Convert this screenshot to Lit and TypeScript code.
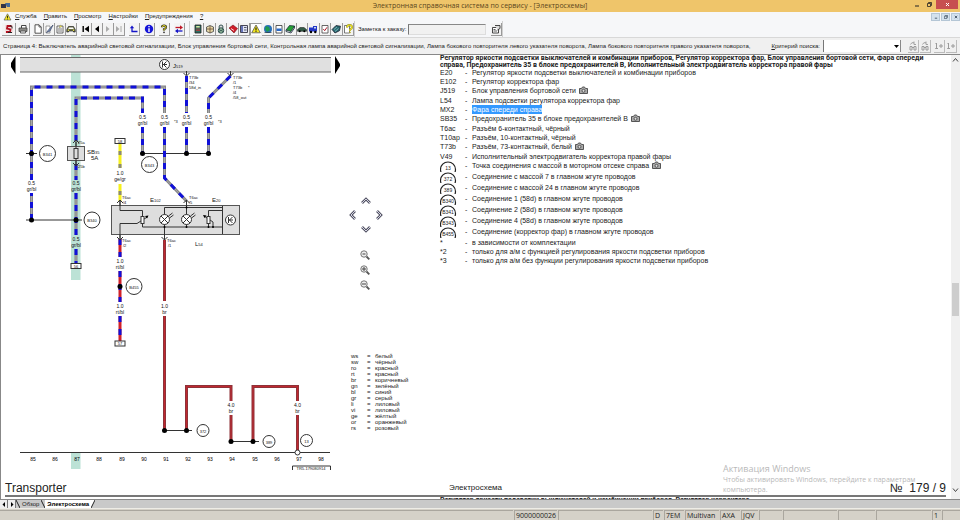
import { LitElement, html, svg, css, nothing } from "lit";
import { customElement } from "lit/decorators.js";
import { classMap } from "lit/directives/class-map.js";

/* ---------- toolbar icons, drawn on a 10 x 10 grid ---------- */
const ICONS: Record<string, unknown> = {
  elsa: svg`<rect x="1" y="1" width="8" height="8" fill="#f3dede"/><path d="M7.500 2H3.500L3 4.500 6.500 5.500 6 8H2" fill="none" stroke="#b01020" stroke-width="1.800"/><path d="M6 1.500l2 1v2M4 8.500h4" stroke="#222" fill="none"/>`,
  print: svg`<path d="M3.500 4V1.500H8V4" fill="#fff" stroke="#444"/><path d="M1 4h8v3.500H1z" fill="#8a8a86" stroke="#444" stroke-width=".8"/><path d="M2.500 7h5v2h-5z" fill="#eee" stroke="#444" stroke-width=".8"/>`,
  page: svg`<path d="M2 .8h4l2.200 2.200v6.200H2z" fill="#fff" stroke="#444" stroke-width=".9"/><path d="M6 .8V3h2.200" fill="none" stroke="#444" stroke-width=".8"/>`,
  brush: svg`<path d="M2 2h4v7H2z" fill="#fff" stroke="#777" stroke-width=".7"/><path d="M9 1L4 6.500 2.500 8.500 6 7z" fill="#7d90b8" stroke="#3a4768" stroke-width=".7"/>`,
  edit: svg`<path d="M2 2h6v7H2z" fill="#fff" stroke="#444" stroke-width=".8"/><path d="M3 5h4M3 7h4" stroke="#555" stroke-width=".8"/><path d="M5 1l2.500 1.500L4 4z" fill="#e8dd50" stroke="#777" stroke-width=".4"/>`,
  car: svg`<path d="M.8 5.500L2.500 2.500h5l1.700 3v2.500H7.500V7h-5v1H.8z" fill="#6b7048" stroke="#222" stroke-width=".7"/><path d="M3 3.500h4l.7 1.500H2.300z" fill="#fff"/><circle cx="2.500" cy="6.200" r=".7" fill="#f5e94a"/><circle cx="7.500" cy="6.200" r=".7" fill="#f5e94a"/>`,
  first: svg`<path d="M2.200 2v6" stroke="#000" stroke-width="1.400"/><path d="M8 1.800v6.400L3.500 5z"/>`,
  prev: svg`<path d="M7 1.800v6.400L3 5z"/>`,
  next: svg`<path d="M3 2v6L6.500 5z" fill="#aaa"/>`,
  last: svg`<path d="M2 2v6L5.500 5z" fill="#aaa"/><path d="M7 2v6" stroke="#aaa"/>`,
  back: svg`<path d="M3 3.500V7.500h5.500" fill="none" stroke="#1414c8" stroke-width="1.300"/><path d="M.8 4.300L3 1.500l2.200 2.800z" fill="#1414c8"/>`,
  info: svg`<circle cx="5" cy="5" r="4.200" fill="#1414d8"/><path d="M5 4.300V8M5 2v1.300" stroke="#fff" stroke-width="1.400"/>`,
  help: svg`<path d="M3 3.200Q3 1.500 5 1.500t2 1.700Q7 4.500 5 5.200V6.500" fill="none" stroke="#222" stroke-width="2.200"/><path d="M3 3.200Q3 1.500 5 1.500t2 1.700Q7 4.500 5 5.200V6.500" fill="none" stroke="#e6dc20" stroke-width="1"/><circle cx="5" cy="8.300" r=".9" fill="#333"/>`,
  swap: svg`<path d="M1.500 3.500H6" stroke="#c01828" stroke-width="1.300"/><path d="M6 1.300v4.400L9 3.500z" fill="#c01828"/><path d="M4 7h4.500" stroke="#1414c8" stroke-width="1.300"/><path d="M4 4.800v4.400L1 7z" fill="#1414c8"/>`,
  book: svg`<path d="M2 1h6v8H2z" fill="#2c6e62" stroke="#222" stroke-width=".8"/><path d="M3.200 2h3.500v1.500H3.200z" fill="#d8e8a0"/><path d="M3 5h4M3 6.500h4" stroke="#b33" stroke-width=".8"/>`,
  box: svg`<path d="M1.500 3L5 1.500 8.500 3v4.500L5 9 1.500 7.500z" fill="#e6d9a8" stroke="#444" stroke-width=".8"/><path d="M5 2v7M2 5h6" stroke="#6b4a30" stroke-width=".8"/>`,
  gauge: svg`<circle cx="5" cy="3" r="2" fill="#ddd" stroke="#244" stroke-width=".9"/><circle cx="5" cy="6.500" r="2.700" fill="#9fc7a4" stroke="#244" stroke-width=".9"/><path d="M2 5l6 3M8 5L2 8" stroke="#244" stroke-width=".7"/>`,
  red: svg`<path d="M1 4l4-3 4.500 3.500L6 9z" fill="#d01c28" stroke="#701018" stroke-width=".6"/><path d="M3 4.500l3 2" stroke="#fff" stroke-width=".8"/>`,
  panel: svg`<path d="M1.500 1.500h7v7h-7z" fill="#dfe4f4" stroke="#334" stroke-width=".9"/><path d="M2 2h2v6H2z" fill="#6674b8"/><path d="M5 3.500h2.500M5 6h2.500" stroke="#334" stroke-width=".8"/>`,
  warn: svg`<path d="M5 1L9.300 8.800H.7z" fill="#f4e820" stroke="#555" stroke-width=".8"/><path d="M5 3.500v3M5 7.200v.8" stroke="#000" stroke-width="1"/>`,
  globe: svg`<circle cx="5" cy="5" r="4" fill="#2a6fb8"/><path d="M3 2l3 1 1 3-3 2-2-3z" fill="#1e9a50"/><path d="M1.500 8.500h7" stroke="#234" stroke-width=".7"/>`,
  tank: svg`<path d="M2 1.500h6v7.500H2z" fill="#fff" stroke="#333" stroke-width=".8"/><path d="M2.500 4.500h5V7h-5z" fill="#2868c8"/>`,
  green: svg`<path d="M1 6l3.500-4.500 5 .5L6 7.500z" fill="#25a035" stroke="#123" stroke-width=".7"/><path d="M1 6v1.500L6 9l3.500-5V2" fill="none" stroke="#123" stroke-width=".8"/>`,
  sedan: svg`<path d="M.5 5.500L3 3.500h4l2.500 2v1.800H.5z" fill="#335c48" stroke="#111" stroke-width=".5"/><circle cx="2.700" cy="7.300" r="1" /><circle cx="7.300" cy="7.300" r="1"/>`,
  truck: svg`<path d="M1 3.500h4v4H1zM5 2h4v5.500H5z" fill="#2336c8"/><path d="M6 3h2v1.500H6z" fill="#cde"/><circle cx="3" cy="8" r="1.200"/><circle cx="7.300" cy="8" r="1.200"/>`,
  check: svg`<path d="M2 1.500h6V9H2z" fill="#fff" stroke="#444" stroke-width=".8"/><path d="M3.300 5l1.400 1.700L7 3.300" fill="none" stroke="#b02030" stroke-width="1"/>`,
  teal: svg`<path d="M1 5.500L5 1.500l4.500.7-1 4.500L4 9z" fill="#2a6a72" stroke="#112" stroke-width=".7"/><path d="M3 5.500l3-2.500M4 7.500l3.500-3" stroke="#9ad0d0" stroke-width=".7"/>`,
  hint: svg`<path d="M1.500 1.500h5V9h-5z" fill="#fff" stroke="#444" stroke-width=".7"/><path d="M4 3.500Q4.200 1 6.500 1T9 3.300Q9 5 7 5.500V7" fill="none" stroke="#888420" stroke-width="2"/><path d="M4 3.500Q4.200 1 6.500 1T9 3.300Q9 5 7 5.500V7" fill="none" stroke="#f0e628" stroke-width="1.200"/><circle cx="7" cy="8.500" r=".8" fill="#b5aa18"/>`,
  note: svg`<path d="M1.500 3.500h6V9h-6z" fill="#fff" stroke="#333" stroke-width=".9"/><path d="M4 1.500h5v3L6.500 6" fill="#ddd" stroke="#333" stroke-width=".9"/><path d="M2.500 5.500h2M2.500 7h3.500" stroke="#333" stroke-width=".8"/>`,
  find: svg`<path d="M2 9V5.500h2V9zM6 9V5.500h2V9zM4 6.500h2" fill="none" stroke="#9a9a9a"/><path d="M2.500 3.500Q3.500.8 6 1.800M6 .5v3h2" fill="none" stroke="#9a9a9a" stroke-width=".9"/>`,
  step: svg`<path d="M1.500 3l1-1v5.500M1.200 7.500H4M5 5h4M7 3v4" fill="none" stroke="#9a9a9a"/>`,
};
const icon = (n: string) => html`<svg class="ico" viewBox="0 0 10 10" aria-hidden="true">${ICONS[n]}</svg>`;

const TOOLS: [string, string][][] = [
  [["elsa", "Служба"], ["print", "Печать"]],
  [["page", "Новый"], ["brush", "Правка"], ["edit", "Изменить"], ["car", "Автомобиль"]],
  [["first", "В начало"], ["prev", "Назад"], ["next", "Вперёд"], ["last", "В конец"]],
  [["back", "Возврат"]],
  [["info", "Информация"]],
  [["help", "Справка"]],
  [["swap", "Обмен"]],
];
const MODULES = ["book", "box", "gauge", "red", "panel", "warn", "globe", "tank", "green", "sedan", "truck", "check", "teal", "hint"];

/* ---------- wiring diagram data ---------- */
const BLUE_WIRES = [
  "M31.500 220V193M31.500 180V87H164.500V113", "M164.500 127V178L186.500 201",
  "M76 141V98H142.500V113", "M142.500 127V153", "M76 164V180", "M76 193V235", "M76 249V263",
  "M186.500 76V113", "M186.500 127V153", "M230.500 76L208.500 98V113", "M208.500 127V153",
];
const BROWN_WIRES = [
  "M164.500 240V301M164.500 316V430", "M186.500 430V386.500H231V401M231 415V441",
  "M253 441V386.500H297.500V401M297.500 415V451",
];
const DOTS = [[31.5, 153.5], [142.5, 153.5], [186.5, 153.5], [208.5, 153.5], [31.5, 220], [76, 220], [120, 286.5], [164.5, 430.5], [186.5, 430.5], [231, 441.5], [253, 441.5]];
const RINGS: [number, number, number, string][] = [
  [47.5, 153.5, 8, "B341"], [92, 220, 8, "B340"], [149.5, 164.5, 8, "B343"], [134, 286.5, 8, "B455"],
  [203, 430.5, 6, "372"], [269, 441.5, 6, "389"], [306.5, 440.5, 6, "13"],
];
const GAUGES: [number, number, string, string][] = [
  [31.5, 185, "0.5", "gr/bl"], [76, 185, "0.5", "gr/bl"], [76, 241, "0.5", "gr/bl"],
  [142.5, 119, "0.5", "gr/bl"], [164.5, 119, "0.5", "gr/bl"], [186.5, 119, "0.5", "gr/bl"], [208.5, 119, "0.5", "gr/bl"],
  [120, 175, "1.0", "ge/gr"], [120, 263, "1.0", "rt/bl"], [120, 308, "1.0", "rt/bl"], [164.5, 308, "1.0", "br"],
  [231, 407, "4.0", "br"], [297.5, 407, "4.0", "br"],
];
const TINY: [number, number, string][] = [
  [78, 144, "25a"], [78, 168, "25b"], [122, 199, "T6ac"], [123, 204, "/4"], [189, 199, "T6ac"], [189, 204, "/5"],
  [122, 242, "T6ac"], [123, 247, "/2"], [167, 242, "T6ac"], [168, 247, "/1"],
  [189, 79, "T73b"], [189, 84, "/34"], [189, 89, "58d_in"],
  [233, 79, "T73b"], [233, 84, "/1"], [233, 89, "T73b"], [233, 94, "/4"], [233, 99, "/58_out"],
  [174, 123, "*3"], [218, 123, "*3"], [248, 89, "*"],
];
const NAMES: [number, number, string, string][] = [
  [173, 68, "J", "519"], [150, 202, "E", "102"], [212, 202, "E", "20"], [195, 246, "L", "54"], [87, 154, "SB", "35"], [91, 160, "5A", ""],
];
const TERMINALS: [number, number, string][] = [[120, 141, "58"], [76, 266, "56"], [120, 343.5, "57"]];

const COLORS = [
  ["ws", "белый"], ["sw", "чёрный"], ["ro", "красный"], ["rt", "красный"], ["br", "коричневый"], ["gn", "зелёный"], ["bl", "синий"],
  ["gr", "серый"], ["li", "лиловый"], ["vi", "лиловый"], ["ge", "жёлтый"], ["or", "оранжевый"], ["rs", "розовый"],
];

type Part = { code: string; text: string; cam?: boolean; ring?: boolean; sel?: boolean };
const PARTS: Part[] = [
  { code: "E20", text: "Регулятор яркости подсветки выключателей и комбинации приборов" },
  { code: "E102", text: "Регулятор корректора фар" },
  { code: "J519", text: "Блок управления бортовой сети", cam: true },
  { code: "L54", text: "Лампа подсветки регулятора корректора фар" },
  { code: "MX2", text: "Фара спереди справа", sel: true },
  { code: "SB35", text: "Предохранитель 35 в блоке предохранителей B", cam: true },
  { code: "T6ac", text: "Разъём 6-контактный, чёрный" },
  { code: "T10ap", text: "Разъём, 10-контактный, чёрный" },
  { code: "T73b", text: "Разъём, 73-контактный, белый", cam: true },
  { code: "V49", text: "Исполнительный электродвигатель корректора правой фары" },
  { code: "13", text: "Точка соединения с массой в моторном отсеке справа", ring: true, cam: true },
  { code: "372", text: "Соединение с массой 7 в главном жгуте проводов", ring: true },
  { code: "389", text: "Соединение с массой 24 в главном жгуте проводов", ring: true },
  { code: "B340", text: "Соединение 1 (58d) в главном жгуте проводов", ring: true },
  { code: "B341", text: "Соединение 2 (58d) в главном жгуте проводов", ring: true },
  { code: "B343", text: "Соединение 4 (58d) в главном жгуте проводов", ring: true },
  { code: "B455", text: "Соединение (корректор фар) в главном жгуте проводов", ring: true },
  { code: "*", text: "в зависимости от комплектации" },
  { code: "*2", text: "только для а/м с функцией регулирования яркости подсветки приборов" },
  { code: "*3", text: "только для а/м без функции регулирования яркости подсветки приборов" },
];
const HEADING = "Регулятор яркости подсветки выключателей и комбинации приборов, Регулятор корректора фар, Блок управления бортовой сети, Фара спереди справа, Предохранитель 35 в блоке предохранителей B, Исполнительный электродвигатель корректора правой фары";
const NEXT_HEADING = "Регулятор яркости подсветки выключателей и комбинации приборов, Регулятор корректора";

@customElement("wiring-diagram")
export class WiringDiagram extends LitElement {
  static styles = css`
    :host { display: block; }
    svg { display: block; }
    text { font-family: "Liberation Sans", Arial, sans-serif; fill: #111; }
    .gauge { font-size: 5px; text-anchor: middle; }
    .tiny { font-size: 4px; }
    .name { font-size: 6px; }
    .sub { font-size: 4px; }
    .mid { font-size: 4px; text-anchor: middle; }
    .axis { font-size: 5px; text-anchor: middle; fill: #000; }
    .mark { fill: #bce2d6; }
    .thin { fill: none; stroke: #333; stroke-width: 1; }
    .body { fill: #dedede; stroke: #555; }
    .bar { fill: #e0e0e0; }
    .rim { stroke: #666; }
    .wire { fill: none; stroke-width: 3; }
    .grey { stroke: #858585; }
    .core { fill: none; stroke: #a8a8a8; stroke-width: 1; }
    .blue { stroke: #1010d8; stroke-dasharray: 6 6; }
    .yellow { stroke: #f6f01c; }
    .ash { stroke: #8a8a78; stroke-dasharray: 4 9; }
    .red { stroke: #d02028; }
    .navy { stroke: #1010d8; stroke-dasharray: 6 7; }
    .brown { stroke: #8e3238; }
    .shine { fill: none; stroke: #c02830; stroke-width: 1; }
    .white { fill: #fff; stroke: #333; }
  `;

  private lamp(x: number) {
    return svg`<circle class="white" cx=${x} cy="219.500" r="5"/>
      <path class="thin" d="M${x - 3.5} 216l7 7M${x + 3.5} 216l-7 7M${x + 4} 216l4-3M${x + 5} 218l4-3"/>`;
  }
  private resistor(x: number) {
    return svg`<rect class="white" x=${x - 1.5} y="216.500" width="3" height="7"/>`;
  }
  private pin(x: number, y: number, up: boolean) {
    return svg`<path class="thin" d=${up ? `M${x - 3} ${y + 2}l3-3 3 3M${x} ${y}v5` : `M${x - 3} ${y - 2}l3 3 3-3M${x} ${y}v-4`}/>`;
  }

  render() {
    return html`<svg width="344" height="424" viewBox="0 55 344 424" role="img" aria-label="Электросхема">
      <path class="mark" d="M71 55h9.500v225H71zM71 453h9.500v16H71z"/>
      <path class="bar" d="M20 57h311v15H20z"/>
      <path class="rim" d="M20 57.500h311M20 72h311"/>
      <path d="M15.500 56v18L11 67v-4zM335 56v18l5-8v-2z"/>
      <circle class="white" cx="164.500" cy="64.500" r="5"/>
      <path class="thin" d="M162.500 61.500v6M166.500 61.500l-3 3 3 3M163 64.500h4"/>

      <path class="thin" d="M26 153.500h11M142 153.500h67M26 220h56M164 430.500h28M231 441.500h28M20 452.500h310M292.500 470v-4h38v4"/>

      ${BLUE_WIRES.map((d) => svg`<path class="wire grey" d=${d}/><path class="core" d=${d}/><path class="wire blue" d=${d}/>`)}
      <path class="wire yellow" d="M120 143V168M120 184V201"/>
      <path class="wire ash" d="M120 151V168M120 191V201"/>
      <path class="wire red" d="M120 239V257M120 271V302M120 316V341"/>
      <path class="wire navy" d="M120 239V257M120 271V302M120 316V341"/>
      ${BROWN_WIRES.map((d) => svg`<path class="wire brown" d=${d}/><path class="shine" d=${d}/>`)}

      <rect class="body" x="67.500" y="146.500" width="17" height="14"/>
      <rect class="thin" x="74" y="148.500" width="4" height="10"/>
      <path class="thin" d="M76 142v6M76 159v6"/>
      ${this.pin(76, 141, true)}${this.pin(76, 165, false)}

      <rect class="body" x="111.500" y="205.500" width="128" height="29"/>
      <path class="thin" d="M222.500 206v28M120 201v9.500h22.500v6M120 240v-16.500h17l11-7M142.500 223v4h80M164.500 240v-32.500h58M186.500 200v27M222 210.500h-13.500v6M208.500 223v4M204 216l9 6v5"/>
      <path d="M148.500 215.500l-3.500.5 2 2.500zM203 215l3.500.5-2 2.500z"/>
      ${this.resistor(142.5)}${this.resistor(208.5)}${this.lamp(164.5)}${this.lamp(186.5)}
      <circle class="white" cx="230.500" cy="220" r="5"/>
      <path class="thin" d="M228.500 217v6M232.500 217l-3 3 3 3M229 220h4"/>
      ${this.pin(120, 201, true)}${this.pin(186.5, 201, true)}${this.pin(120, 239, false)}${this.pin(164.5, 239, false)}
      ${this.pin(186.5, 75, false)}${this.pin(230.5, 75, false)}
      ${[[164.5, 227], [186.5, 227], [186.5, 207.5], [208.5, 227], [213, 227]].map(([x, y]) => svg`<circle cx=${x} cy=${y} r="1"/>`)}

      ${DOTS.map(([x, y]) => svg`<circle cx=${x} cy=${y} r="2.500"/>`)}
      <circle class="white" cx="297.500" cy="452.500" r="2.500"/>
      ${RINGS.map(([x, y, r, t]) => svg`<circle class="white" cx=${x} cy=${y} r=${r}/><text class="mid" x=${x} y=${y + 2}>${t}</text>`)}
      ${TERMINALS.map(([x, y, t]) => svg`<rect class="white" x=${x - 5} y=${y - 2.5} width="10" height="5"/><text class="mid" x=${x} y=${y + 1.5}>${t}</text>`)}
      ${GAUGES.map(([x, y, a, b]) => svg`<text class="gauge" x=${x} y=${y}>${a}</text><text class="gauge" x=${x} y=${y + 6}>${b}</text>`)}
      ${TINY.map(([x, y, t]) => svg`<text class="tiny" x=${x} y=${y}>${t}</text>`)}
      ${NAMES.map(([x, y, a, b]) => svg`<text class="name" x=${x} y=${y}>${a}<tspan class="sub">${b}</tspan></text>`)}
      ${Array.from({ length: 14 }, (_, i) => svg`<text class="axis" x=${Math.round(33 + i * 22.15)} y="461">${85 + i}</text>`)}
      <text class="mid" x="311" y="470">TR5-179080914</text>
    </svg>`;
  }
}

@customElement("app-root")
export class AppRoot extends LitElement {
  static styles = css`
    :host { display: flex; flex-direction: column; min-height: 100vh; background: #fff; color: #222;
      font: 6px/9px "Liberation Sans", Arial, sans-serif; overflow: hidden; }
    * { box-sizing: border-box; }
    button, input, select { font: inherit; color: inherit; padding: 0; margin: 0; border: 0; background: none; border-radius: 0; }
    button { display: flex; align-items: center; justify-content: center; }
    .ico { width: 10px; height: 10px; display: block; flex: none; }

    .title { display: grid; grid-template-columns: 1fr auto 1fr; align-items: center; height: 12px; background: #efc56a; }
    .title h1 { margin: 0; font: 400 7px/12px "Open Sans", sans-serif; color: #5b461c; }
    .logo { width: 9px; height: 6px; margin-left: 1px; }
    .caption { display: flex; justify-self: end; align-self: start; }
    .caption button { width: 13px; height: 9px; }
    .caption .close { width: 22px; margin-right: 2px; background: #c74f50; }
    .caption svg { width: 5px; height: 5px; }

    .menu { display: flex; align-items: center; height: 9px; background: #f6f7f9; padding-left: 3px; }
    .menu a { color: #222; text-decoration: none; margin-right: 7px; }
    .menu u { text-underline-offset: 1px; }
    .menu .ico { width: 9px; height: 8px; margin-right: 3px; }
    .mdi { display: flex; gap: 1px; margin-left: auto; }
    .mdi button { width: 9px; height: 8px; background: #d4e2ee; border: 1px solid #b4c6d6; }
    .mdi svg { width: 4px; height: 4px; }

    .tools { display: flex; align-items: center; height: 17px; padding-left: 2px; background: #f6f7f9; border-bottom: 1px solid #d8d8d8; }
    .group { display: flex; margin-right: 4px; }
    .tool { width: 11px; height: 13px; background: #f3f3f3; border-right: 1px solid #9a9a9a; border-bottom: 1px solid #9a9a9a; }
    .wide { margin-right: 3px; }
    .wide .tool { width: 14px; }
    .modules { display: grid; grid-template-columns: repeat(14, 1fr); width: 161px; }
    .modules .tool { width: auto; }
    .tool.on { background: #fff; border: 1px solid #999; border-right-color: #eee; border-bottom-color: #eee; }
    .split { width: 1px; height: 16px; background: #d0d0d0; margin: 0 3px 0 0; }
    .memo { width: 78px; height: 11px; background: #f1f1f1; border: 1px solid #ddd; border-top-color: #888; border-left-color: #777; margin: 0 5px 0 1px; }

    .info { display: flex; align-items: center; height: 17px; padding: 0 3px; background: #f0f0f0; border-bottom: 1px solid #888; white-space: nowrap; }
    .path { flex: 1; min-width: 0; overflow: hidden; }
    .combo { display: flex; height: 12px; width: 78px; margin: 0 4px 0 3px; background: #fff; border-left: 1px solid #777; border-right: 1px solid #888; position: relative; }
    .combo select { flex: 1; appearance: none; }
    .combo svg { position: absolute; right: 1px; top: 5px; width: 5px; height: 3px; pointer-events: none; }
    .search { display: flex; gap: 1px; margin-left: 3px; }
    .search .tool { background: #f0f0f0; border-color: #bbb; }

    .work { flex: 1; display: flex; border-left: 1px solid #888; }
    .sheet { flex: 1; min-width: 0; display: flex; flex-direction: column; }
    .body { flex: 1; display: flex; }
    wiring-diagram { margin-left: -1px; flex: none; }
    .side { width: 96px; flex: none; padding: 140px 0 0 7px; }
    .pad { display: grid; grid-template-columns: repeat(3, 12px); grid-auto-rows: 14px; column-gap: 1px; margin-left: -4px; }
    .pad button { width: 12px; height: 12px; }
    .pad .up { grid-column: 2; grid-row: 1; }
    .pad .left { grid-column: 1; grid-row: 2; }
    .pad .right { grid-column: 3; grid-row: 2; }
    .pad .down { grid-column: 2; grid-row: 3; }
    .zooms { display: grid; gap: 3px; margin: 12px 0 0 8px; }
    .zooms button { width: 12px; height: 12px; }
    .legend { margin-top: 62px; border-collapse: collapse; font: 6px/6px "Liberation Sans", sans-serif; }
    .legend td { padding: 0; height: 6px; }
    .legend td:first-child { width: 16px; }
    .legend td:nth-child(2) { width: 8px; }

    .list { flex: 1; min-width: 0; font: 7px/9px "Liberation Sans", Arial, sans-serif; color: #222; }
    .list h2, .next { margin: 0; font: 700 7px/7px Roboto, Arial, sans-serif; color: #222; }
    .list h2 { height: 13px; padding-right: 15px; }
    .parts { border-collapse: collapse; }
    .parts td { padding: 0; height: 9px; white-space: nowrap; vertical-align: top; }
    .parts td:first-child { width: 25px; }
    .parts td:nth-child(2) { width: 7px; }
    .parts .cam td { height: 10px; }
    .parts .cam td:last-child { line-height: 10px; }
    .parts .ring td { height: 11px; }
    .badge { display: block; width: 17px; height: 11px; overflow: hidden; }
    .badge text { font: 5px "Liberation Sans", sans-serif; text-anchor: middle; fill: #222; }
    .camera { width: 9px; height: 8px; margin-left: 1px; vertical-align: top; }
    mark { background: #3399ff; color: #fff; padding: 0; display: inline-block; }

    .foot { display: grid; grid-template-columns: 1fr auto 1fr; align-items: center; height: 16px; margin: 0 5px 0 4px; border-bottom: 2px solid #777;
      font: 8px/14px "Liberation Sans", sans-serif; color: #222; }
    .model { font-size: 12px; }
    .number { font-size: 12px; justify-self: end; white-space: pre; }
    .next { height: 2px; overflow: hidden; margin-left: 439px; }
    .scroll { width: 9px; flex: none; display: flex; flex-direction: column; align-items: center; background: #f0f0f0; padding: 2px 0; }
    .scroll svg { width: 7px; height: 6px; }
    .thumb { width: 7px; height: 33px; background: #cdcdcd; margin-top: 220px; }
    .scroll svg:last-child { margin-top: auto; margin-bottom: 4px; }

    .tabs { display: flex; height: 9px; background: #c9c9c9; border-top: 1px solid #888; line-height: 8px; }
    .tabs button { width: 8px; height: 8px; background: #eee; border-right: 1px solid #777; }
    .tabs button svg { width: 4px; height: 5px; }
    .tab { color: #222; text-decoration: none; padding: 0 2px; }
    .tab.on { background: #fff; font-weight: 700; color: #000; }
    .slash { width: 4px; height: 8px; }

    .status { display: flex; height: 12px; padding-top: 1px; background: #d5d1c8; font: 7px/10px "Open Sans", sans-serif; border-top: 1px solid #eeece6; }
    .status span { height: 10px; padding-left: 1px; border-left: 1px solid #aaa69e; border-top: 1px solid #aaa69e; margin-left: 1px; line-height: 9px; flex: none; }
    .status .grow { flex: 1; border-left: 0; margin: 0; }

    .water { position: absolute; right: 40px; bottom: 13px; width: 197px; color: #b9b9b9; font: 7px/10px "Open Sans", sans-serif; pointer-events: none; }
    .water strong { display: block; font: 400 9px/12px "Open Sans", sans-serif; }
    .frame { position: relative; display: flex; flex: 1; flex-direction: column; }
  `;

  private chevron(d: string, cls: string, label: string) {
    return html`<button class=${cls} aria-label=${label}><svg class="ico" viewBox="0 0 10 10"><path d=${d} fill="none" stroke="#555566" stroke-width="2.600"/><path d=${d} fill="none" stroke="#d5d5e2" stroke-width="1"/></svg></button>`;
  }
  private lens(sign: string, label: string) {
    return html`<button aria-label=${label}><svg class="ico" viewBox="0 0 10 10"><path d="M6.500 6.500L9.300 9.300" stroke="#555" stroke-width="1.800"/><circle cx="4" cy="4" r="3.200" fill="#eee" stroke="#777" stroke-width="1"/><path d=${sign} stroke="#444" stroke-width="1"/></svg></button>`;
  }
  private camera() {
    return html`<svg class="camera" viewBox="0 0 9 8"><path d="M.5 2.500h2l1-1.500h2l1 1.500h2v5h-8z" fill="#aaa" stroke="#555"/><circle cx="4.500" cy="4.800" r="1.500" fill="#ddd" stroke="#555"/></svg>`;
  }
  private tool(name: string, label: string, on = false) {
    return html`<button class=${classMap({ tool: true, on })} aria-label=${label}>${icon(name)}</button>`;
  }

  render() {
    return html`
      <header class="title">
        <svg class="logo" viewBox="0 0 9 6"><path d="M0 1h5v4H0z" fill="#334"/><path d="M4 0h5v4H6z" fill="#456a98"/></svg>
        <h1>Электронная справочная система по сервису - [Электросхемы]</h1>
        <div class="caption">
          <button aria-label="Свернуть"><svg viewBox="0 0 5 5"><path d="M1 4h4" stroke="#222"/></svg></button>
          <button aria-label="Развернуть"><svg viewBox="0 0 5 5"><path d="M.5 1.500h3v3h-3zM1.500 1V.5h3v3H4" fill="none" stroke="#222" stroke-width=".8"/></svg></button>
          <button class="close" aria-label="Закрыть"><svg viewBox="0 0 5 5"><path d="M1 1l3 3M4 1L1 4" stroke="#fff"/></svg></button>
        </div>
      </header>
      <nav class="menu">
        ${icon("warn")}
        ${["Служба", "Править", "Просмотр", "Настройки", "Предупреждения", "?"].map((m) => html`<a href="#"><u>${m[0]}</u>${m.slice(1)}</a>`)}
        <div class="mdi">
          <button aria-label="Свернуть окно"><svg viewBox="0 0 5 5"><path d="M1 4h3" stroke="#345"/></svg></button>
          <button aria-label="Восстановить окно"><svg viewBox="0 0 5 5"><path d="M.5 1.500h3v3h-3zM1.500 1V.5h3v3" fill="none" stroke="#345" stroke-width=".8"/></svg></button>
          <button aria-label="Закрыть окно"><svg viewBox="0 0 5 5"><path d="M1 1l3 3M4 1L1 4" stroke="#345"/></svg></button>
        </div>
      </nav>
      <div class="tools">
        ${TOOLS.map((g, i) => html`<div class=${classMap({ group: true, wide: i === 0 })}>${g.map(([n, l]) => this.tool(n, l))}</div>`)}
        <div class="split"></div>
        <div class="modules">${MODULES.map((n) => this.tool(n, n, n === "warn"))}</div>
        <div class="split"></div>
        <label for="memo">Заметка к заказу:</label><input id="memo" class="memo">
        ${this.tool("note", "Заметка")}
        <div class="split"></div>
      </div>
      <div class="info">
        <div class="path">Страница 4: Выключатель аварийной световой сигнализации, Блок управления бортовой сети, Контрольная лампа аварийной световой сигнализации, Лампа бокового повторителя левого указателя поворота, Лампа бокового повторителя правого указателя поворота,</div>
        <label for="crit"><u>К</u>ритерий поиска:</label>
        <span class="combo"><select id="crit"><option></option></select><svg viewBox="0 0 5 3"><path d="M0 0h5L2.500 3z"/></svg></span>
        <span class="search">${this.tool("find", "Найти")}${this.tool("find", "Найти далее")}</span>
        <span class="search">${this.tool("step", "Следующий")}${this.tool("step", "Предыдущий")}</span>
      </div>
      <div class="frame">
        <div class="work">
          <main class="sheet">
            <div class="body">
              <wiring-diagram></wiring-diagram>
              <div class="side">
                <div class="pad">
                  ${this.chevron("M1 7l4-4 4 4", "up", "Вверх")}
                  ${this.chevron("M7 1L3 5l4 4", "left", "Влево")}
                  ${this.chevron("M3 1l4 4-4 4", "right", "Вправо")}
                  ${this.chevron("M1 3l4 4 4-4", "down", "Вниз")}
                </div>
                <div class="zooms">
                  ${this.lens("M2.500 4h3", "Масштаб")}${this.lens("M2 4h4M4 2v4", "Увеличить")}${this.lens("M2 4h4", "Уменьшить")}
                </div>
                <table class="legend">${COLORS.map(([c, n]) => html`<tr><td>${c}</td><td>=</td><td>${n}</td></tr>`)}</table>
              </div>
              <section class="list">
                <h2>${HEADING}</h2>
                <table class="parts">
                  ${PARTS.map((p) => html`<tr class=${classMap({ cam: !!p.cam && !p.ring, ring: !!p.ring })}>
                    <td>${p.ring ? html`<svg class="badge" viewBox="0 0 17 11"><circle cx="8" cy="8.500" r="7.500" fill="none" stroke="#222" stroke-width="1.200"/><text x="8" y="9">${p.code}</text></svg>` : p.code}</td>
                    <td>-</td>
                    <td>${p.sel ? html`<mark>${p.text}</mark>` : p.text} ${p.cam ? this.camera() : nothing}</td>
                  </tr>`)}
                </table>
              </section>
            </div>
            <footer class="foot">
              <span class="model">Transporter</span><span>Электросхема</span><span class="number">№  179 / 9</span>
            </footer>
            <div class="next">${NEXT_HEADING}</div>
          </main>
          <div class="scroll">
            <svg viewBox="0 0 7 6"><path d="M1 4.500l2.500-3 2.500 3" fill="none" stroke="#444"/></svg>
            <div class="thumb"></div>
            <svg viewBox="0 0 7 6"><path d="M1 1.500l2.500 3 2.500-3" fill="none" stroke="#444"/></svg>
          </div>
        </div>
        <div class="water"><strong>Активация Windows</strong>Чтобы активировать Windows, перейдите к параметрам компьютера.</div>
        <nav class="tabs">
          <button aria-label="Предыдущая вкладка"><svg viewBox="0 0 4 5"><path d="M3 0v5L.5 2.500z"/></svg></button>
          <button aria-label="Следующая вкладка"><svg viewBox="0 0 4 5"><path d="M1 0v5l2.500-2.500z"/></svg></button>
          <svg class="slash" viewBox="0 0 4 8"><path d="M0 0l4 8" stroke="#222"/></svg>
          <a class="tab" href="#">Обзор</a>
          <svg class="slash" viewBox="0 0 4 8"><path d="M0 0l4 8" stroke="#222"/></svg>
          <a class="tab on" href="#">Электросхема</a>
          <svg class="slash" viewBox="0 0 4 8"><path d="M0 0h4L0 8z" fill="#fff"/><path d="M4 0L0 8" stroke="#222"/></svg>
        </nav>
      </div>
      <footer class="status">
        <span class="grow"></span>
        ${([["9000000026", 43], ["", 94], ["D", 10], ["7EM", 20], ["Multivan", 34], ["AXA", 20], ["JQV", 17], ["", 23], ["", 54], ["", 37], ["", 55], ["1", 9], ["", 18]] as [string, number][])
          .map(([t, w]) => html`<span style="width:${w}px">${t}</span>`)}
      </footer>
    `;
  }
}
